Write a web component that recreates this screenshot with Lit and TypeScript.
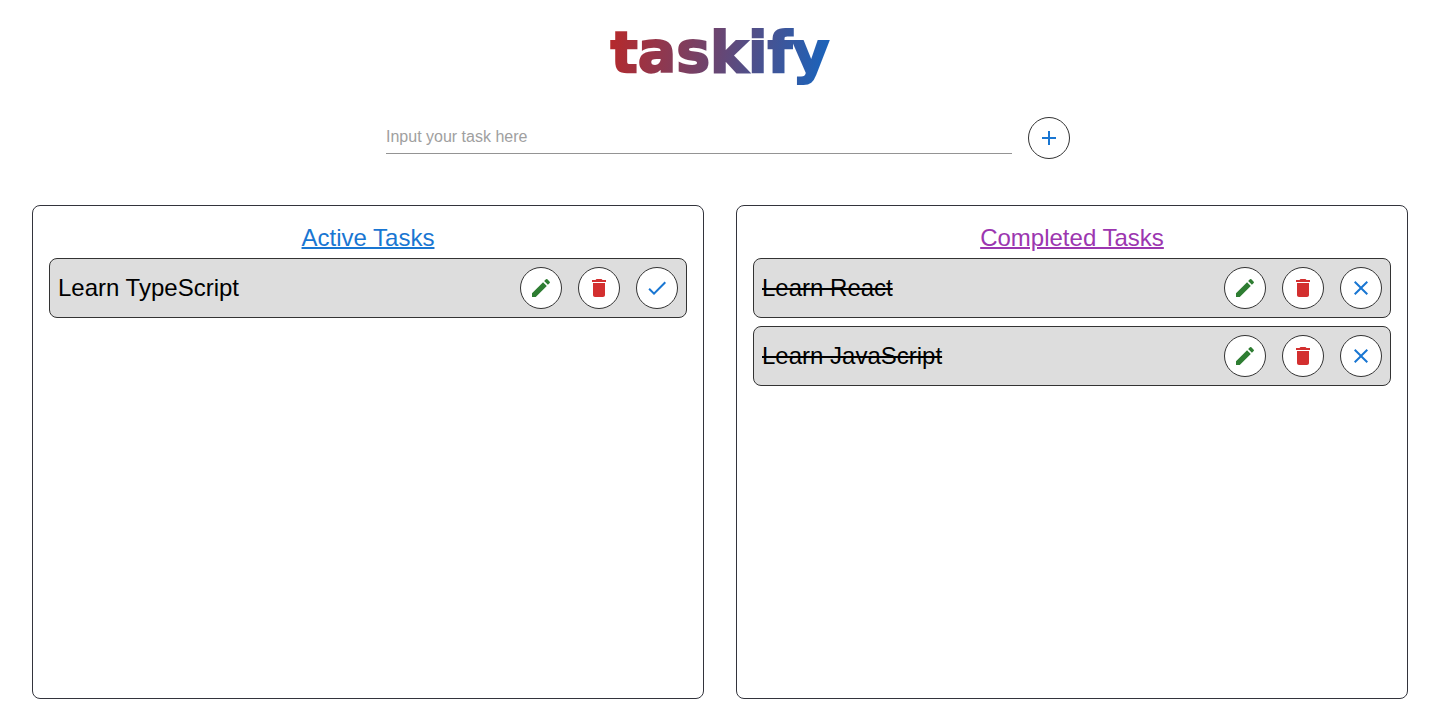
import { LitElement, html, css, svg } from "lit";
import { customElement, state } from "lit/decorators.js";
import { classMap } from "lit/directives/class-map.js";

interface Task {
  id: number;
  title: string;
  done: boolean;
}

const ICONS = {
  add: "M19 13h-6v6h-2v-6H5v-2h6V5h2v6h6v2z",
  edit: "M3 17.25V21h3.75L17.81 9.94l-3.75-3.75L3 17.25zM20.71 7.04c.39-.39.39-1.02 0-1.41l-2.34-2.34a.9959.9959 0 0 0-1.41 0l-1.83 1.83 3.75 3.75 1.83-1.83z",
  remove: "M6 19c0 1.1.9 2 2 2h8c1.1 0 2-.9 2-2V7H6v12zM19 4h-3.5l-1-1h-5l-1 1H5v2h14V4z",
  done: "M9 16.17 4.83 12l-1.42 1.41L9 19 21 7l-1.41-1.41z",
  close: "M19 6.41 17.59 5 12 10.59 6.41 5 5 6.41 10.59 12 5 17.59 6.41 19 12 13.41 17.59 19 19 17.59 13.41 12z",
};

@customElement("app-root")
export class AppRoot extends LitElement {
  @state() private tasks: Task[] = [
    { id: 1, title: "Learn TypeScript", done: false },
    { id: 2, title: "Learn React", done: true },
    { id: 3, title: "Learn JavaScript", done: true },
  ];

  static styles = css`
    :host {
      display: block;
      font-family: "Liberation Sans", Arial, Helvetica, sans-serif;
      color: #000;
    }
    * {
      box-sizing: border-box;
    }
    .header {
      display: flex;
      justify-content: center;
      padding-top: 16px;
    }
    .logo {
      margin: 0;
      font-family: "DejaVu Sans", sans-serif;
      font-weight: 700;
      font-size: 57px;
      line-height: 72px;
      background: linear-gradient(100deg, #b92828, #1565c0);
      -webkit-background-clip: text;
      background-clip: text;
      color: transparent;
      -webkit-text-stroke: 2px transparent;
    }
    .entry {
      display: flex;
      align-items: center;
      gap: 16px;
      max-width: 700px;
      margin: 29px auto 46px;
      padding-left: 16px;
    }
    .field {
      flex: 1;
      min-width: 0;
      height: 32px;
      padding: 0 0 2px;
      border: 0;
      border-bottom: 1px solid #949494;
      outline: none;
      background: none;
      font: inherit;
      font-size: 16px;
    }
    .field::placeholder {
      color: #a0a0a0;
      opacity: 1;
    }
    .round {
      display: inline-flex;
      flex: none;
      padding: 8px;
      border: 1px solid #333;
      border-radius: 50%;
      background: #fff;
      color: #1976d2;
      cursor: pointer;
    }
    .edit {
      color: #2e7d32;
    }
    .remove {
      color: #d32f2f;
    }
    .icon {
      display: block;
      width: 24px;
      height: 24px;
      fill: currentColor;
    }
    .board {
      display: grid;
      grid-template-columns: 1fr 1fr;
      gap: 32px;
      padding: 0 32px;
    }
    .panel {
      min-height: 70vh;
      padding: 16px;
      border: 1px solid #33343c;
      border-radius: 8px;
    }
    .title {
      margin: 0 0 4px;
      text-align: center;
      font-weight: 400;
      font-size: 24px;
      line-height: 32px;
      text-decoration: underline;
      text-decoration-thickness: 2px;
      color: #1976d2;
    }
    .completed .title {
      color: #9c36b0;
    }
    .list {
      display: grid;
      gap: 8px;
      margin: 0;
      padding: 0;
      list-style: none;
    }
    .task {
      display: flex;
      align-items: center;
      gap: 16px;
      padding: 8px;
      border: 1px solid #333;
      border-radius: 8px;
      background: #ddd;
    }
    .name {
      flex: 1;
      min-width: 0;
      font-size: 24px;
      line-height: 32px;
    }
    .struck {
      text-decoration: line-through;
      text-decoration-thickness: 2px;
    }
  `;

  private icon(name: keyof typeof ICONS) {
    return html`<svg class="icon" viewBox="0 0 24 24" aria-hidden="true">${svg`<path d=${ICONS[name]}></path>`}</svg>`;
  }

  private add(e: Event) {
    e.preventDefault();
    const field = this.renderRoot.querySelector<HTMLInputElement>(".field")!;
    const title = field.value.trim();
    if (!title) return;
    this.tasks = [...this.tasks, { id: Date.now(), title, done: false }];
    field.value = "";
  }

  private toggle(id: number) {
    this.tasks = this.tasks.map((t) => (t.id === id ? { ...t, done: !t.done } : t));
  }

  private remove(id: number) {
    this.tasks = this.tasks.filter((t) => t.id !== id);
  }

  private edit(task: Task) {
    const title = window.prompt("Edit task", task.title)?.trim();
    if (title) this.tasks = this.tasks.map((t) => (t.id === task.id ? { ...t, title } : t));
  }

  private row(task: Task) {
    return html`
      <li class="task">
        <span class=${classMap({ name: true, struck: task.done })}>${task.title}</span>
        <button class="round edit" aria-label="Edit" @click=${() => this.edit(task)}>${this.icon("edit")}</button>
        <button class="round remove" aria-label="Delete" @click=${() => this.remove(task.id)}>${this.icon("remove")}</button>
        <button class="round" aria-label=${task.done ? "Reopen" : "Complete"} @click=${() => this.toggle(task.id)}>
          ${this.icon(task.done ? "close" : "done")}
        </button>
      </li>
    `;
  }

  private panel(title: string, done: boolean) {
    return html`
      <section class=${classMap({ panel: true, completed: done })}>
        <h2 class="title">${title}</h2>
        <ul class="list">
          ${this.tasks.filter((t) => t.done === done).map((t) => this.row(t))}
        </ul>
      </section>
    `;
  }

  render() {
    return html`
      <header class="header"><h1 class="logo">taskify</h1></header>
      <form class="entry" @submit=${this.add}>
        <input class="field" type="text" placeholder="Input your task here" aria-label="Input your task here" />
        <button class="round" type="submit" aria-label="Add task">${this.icon("add")}</button>
      </form>
      <main class="board">${this.panel("Active Tasks", false)} ${this.panel("Completed Tasks", true)}</main>
    `;
  }
}
